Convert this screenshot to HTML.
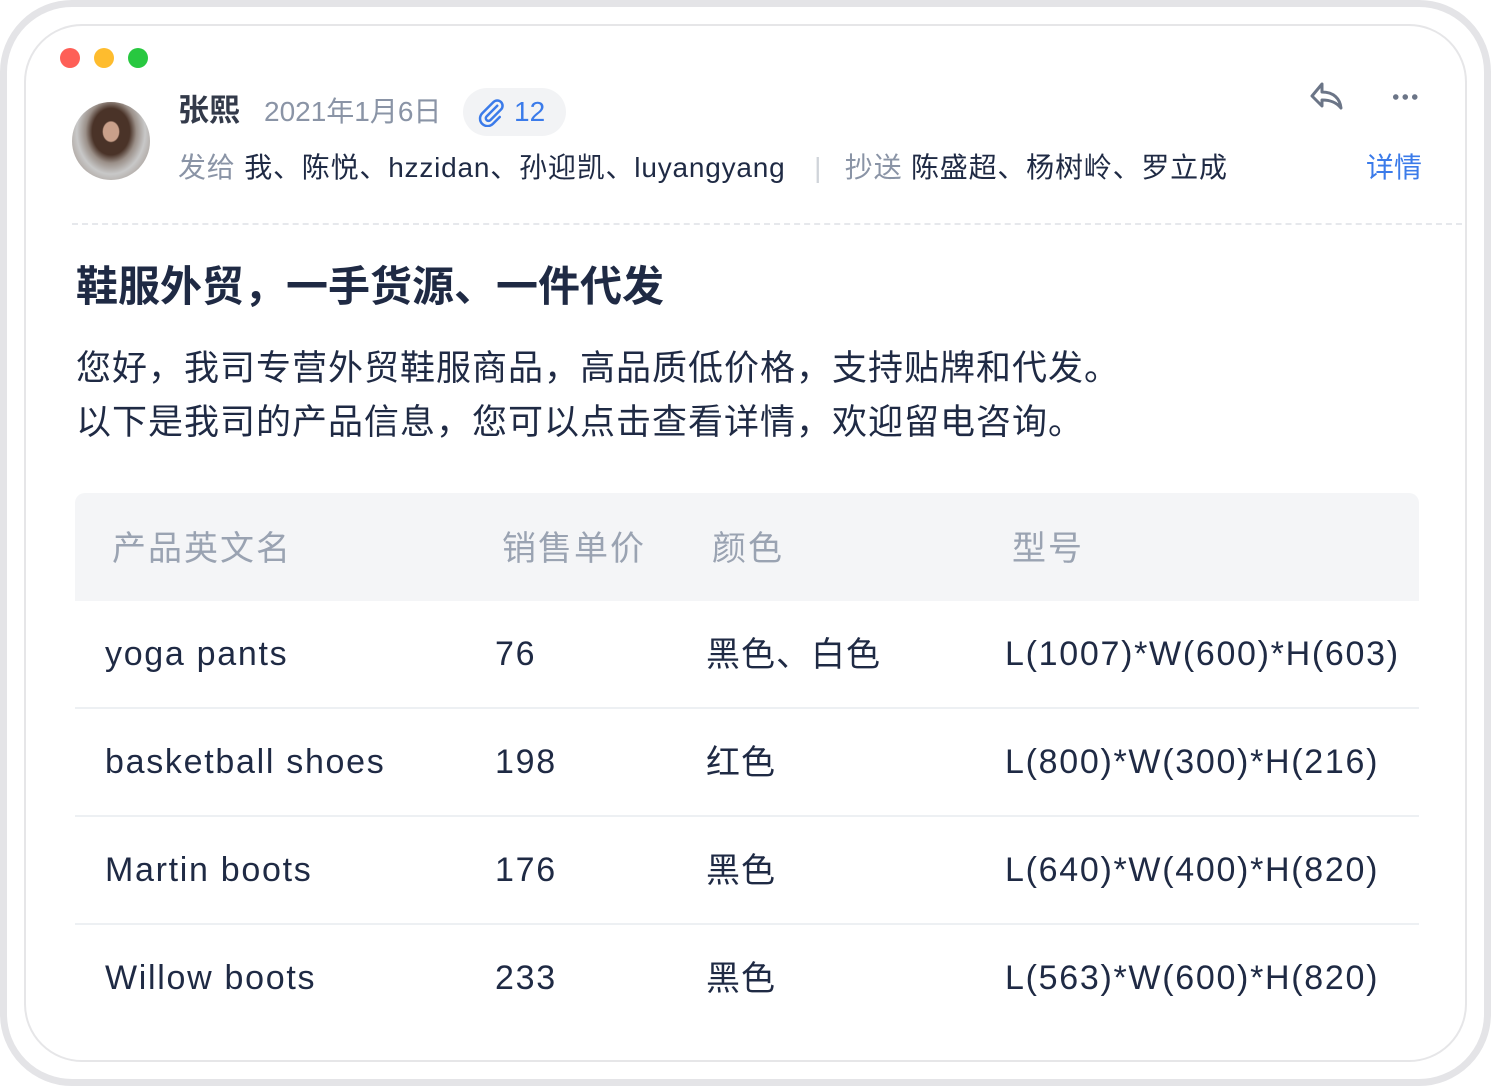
<!DOCTYPE html>
<html><head><meta charset="utf-8"><style>
*{margin:0;padding:0;box-sizing:border-box}
body{width:1491px;height:1086px;background:#fff;font-family:"Liberation Sans","Noto Sans CJK SC",sans-serif;position:relative;overflow:hidden;color:#1f2a44}
.outer{position:absolute;left:0;top:0;width:1491px;height:1086px;border:7px solid #e4e4e7;border-radius:72px}
.inner{position:absolute;left:24px;top:24px;width:1443px;height:1038px;border:2px solid #e6e6e8;border-radius:58px}
.a{position:absolute;white-space:nowrap;line-height:1.2}
.dot{position:absolute;width:20px;height:20px;border-radius:50%;top:48px}
.g{color:#8a94a6}
.t{font-size:34px;letter-spacing:1.7px}
.c{font-size:34px;letter-spacing:1px;font-family:"Noto Sans CJK SC",sans-serif;line-height:1.2}
</style></head><body>
<div class="outer"></div><div class="inner"></div>
<div class="dot" style="left:60px;background:#fe5f57"></div>
<div class="dot" style="left:94px;background:#febc2e"></div>
<div class="dot" style="left:128px;background:#28c840"></div>
<div class="a" style="left:72px;top:102px;width:78px;height:78px;border-radius:50%;background:radial-gradient(ellipse at 50% 38%,#c9a08a 0 14%,#4a3328 16% 34%,#9a8f88 46%,#c8c8c8 62%,#8c7a6e 100%)"></div>
<div class="a" style="left:178px;top:92px;font-size:31px;font-weight:bold;color:#333a4a">张熙</div>
<div class="a g" style="left:264px;top:95px;font-size:28px">2021年1月6日</div>
<div class="a" style="left:463px;top:88px;width:103px;height:48px;border-radius:24px;background:#f2f3f5"></div>
<svg class="a" style="left:476px;top:97px" width="30" height="30" viewBox="0 0 24 24" fill="none" stroke="#3b7bea" stroke-width="2" stroke-linecap="round"><path d="M17 7l-8.5 8.5a2 2 0 0 0 3 3L20 10a4 4 0 0 0-6-6l-9 9a6 6 0 0 0 8.5 8.5L19 16"/></svg>
<div class="a" style="left:514px;top:95px;font-size:28px;color:#3b7bea">12</div>
<div class="a" style="left:178px;top:151px;font-size:28px;letter-spacing:0.8px"><span class="g">发给</span> 我、陈悦、hzzidan、孙迎凯、luyangyang <span style="color:#d0d4da;margin:0 14px 0 20px">|</span> <span class="g">抄送</span> 陈盛超、杨树岭、罗立成</div>
<div class="a" style="left:1366px;top:151px;font-size:28px;color:#3b7bea">详情</div>
<svg class="a" style="left:1309px;top:80px" width="38" height="34" viewBox="0 0 38 34" fill="none" stroke="#6b7587" stroke-width="3" stroke-linejoin="round"><path d="M13 4L3 16l10 10v-6c8 0 14 2 19 8c-1-9-7-16-19-16z"/></svg>
<div class="a" style="left:1391px;top:94px;width:28px;height:6px;background:radial-gradient(circle,#6b7587 2.5px,transparent 3px) 0 0/9.5px 6px repeat-x"></div>
<div class="a" style="left:72px;top:223px;width:1390px;border-top:2px dashed #e6e8ec"></div>
<div class="a" style="left:76px;top:262px;font-size:42px;font-weight:bold">鞋服外贸，一手货源、一件代发</div>
<div class="a" style="left:76px;top:342px;font-size:35px;line-height:54px;letter-spacing:1px">您好，我司专营外贸鞋服商品，高品质低价格，支持贴牌和代发。<br>以下是我司的产品信息，您可以点击查看详情，欢迎留电咨询。</div>
<div class="a" style="left:75px;top:493px;width:1344px;height:108px;background:#f4f5f7;border-radius:10px 10px 0 0"></div>
<div class="a c" style="left:112px;top:526px;color:#9aa3b2;letter-spacing:2px">产品英文名</div>
<div class="a c" style="left:502px;top:526px;color:#9aa3b2;letter-spacing:2px">销售单价</div>
<div class="a c" style="left:712px;top:526px;color:#9aa3b2;letter-spacing:2px">颜色</div>
<div class="a c" style="left:1012px;top:526px;color:#9aa3b2;letter-spacing:2px">型号</div>
<div class="a" style="left:75px;top:707px;width:1344px;border-top:2px solid #edf0f3"></div>
<div class="a" style="left:75px;top:815px;width:1344px;border-top:2px solid #edf0f3"></div>
<div class="a" style="left:75px;top:923px;width:1344px;border-top:2px solid #edf0f3"></div>
<div class="a t" style="left:105px;top:634px">yoga pants</div><div class="a t" style="left:495px;top:634px">76</div><div class="a c" style="left:706px;top:632px">黑色、白色</div><div class="a t" style="left:1005px;top:634px">L(1007)*W(600)*H(603)</div>
<div class="a t" style="left:105px;top:742px">basketball shoes</div><div class="a t" style="left:495px;top:742px">198</div><div class="a c" style="left:706px;top:740px">红色</div><div class="a t" style="left:1005px;top:742px">L(800)*W(300)*H(216)</div>
<div class="a t" style="left:105px;top:850px">Martin boots</div><div class="a t" style="left:495px;top:850px">176</div><div class="a c" style="left:706px;top:848px">黑色</div><div class="a t" style="left:1005px;top:850px">L(640)*W(400)*H(820)</div>
<div class="a t" style="left:105px;top:958px">Willow boots</div><div class="a t" style="left:495px;top:958px">233</div><div class="a c" style="left:706px;top:956px">黑色</div><div class="a t" style="left:1005px;top:958px">L(563)*W(600)*H(820)</div>
</body></html>
